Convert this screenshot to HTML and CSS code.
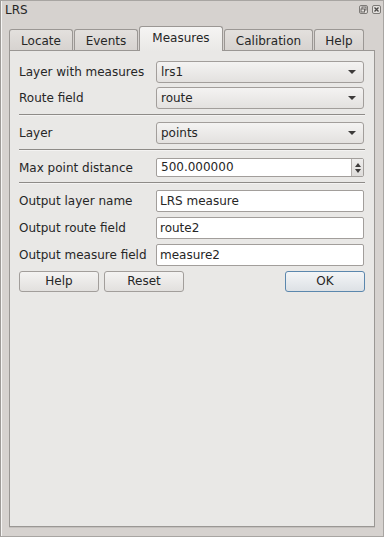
FILE: index.html
```html
<html>
    <head>
       <link rel="stylesheet" href="styles.css">
    </head>
    <body>
       <div id="window">
          <div class="titlebar">
             <span class="title">LRS</span>
             <span class="tb-buttons">
                <svg class="tb-btn" width="9" height="9" viewBox="0 0 9 9">
                   <rect x="0.5" y="0.5" width="8" height="8" rx="1.5" fill="#e4e1de" stroke="#7d7a77"/>
                   <rect x="3" y="2" width="4" height="3" fill="none" stroke="#6a6764"/>
                   <rect x="2" y="4" width="3.5" height="3" fill="#e4e1de" stroke="#6a6764"/>
                </svg>
                <svg class="tb-btn" width="9" height="9" viewBox="0 0 9 9">
                   <rect x="0.5" y="0.5" width="8" height="8" rx="1.5" fill="#e4e1de" stroke="#7d7a77"/>
                   <path d="M2.5 2.5 L6.5 6.5 M6.5 2.5 L2.5 6.5" stroke="#4a4846" stroke-width="1.3"/>
                </svg>
             </span>
          </div>
          <!-- tabs -->
          <div class="tabs">
             <div class="tab" style="width:64px">Locate</div>
             <div class="tab" style="width:64px">Events</div>
             <div class="tab active" style="width:84px">Measures</div>
             <div class="tab" style="width:89px">Calibration</div>
             <div class="tab" style="width:50px">Help</div>
          </div>
          <div class="panel">
             <div class="row">
                <div class="label">Layer with measures</div>
                <div class="combo">lrs1<span class="arrow"></span></div>
             </div>
             <div class="row gap4">
                <div class="label">Route field</div>
                <div class="combo">route<span class="arrow"></span></div>
             </div>
             <div class="sep sep1"></div>
             <div class="row">
                <div class="label">Layer</div>
                <div class="combo">points<span class="arrow"></span></div>
             </div>
             <div class="sep sep2"></div>
             <div class="row">
                <div class="label">Max point distance</div>
                <div class="spin">
                   <span class="spin-text">500.000000</span>
                   <span class="spin-btns">
                      <span class="up"></span>
                      <span class="down"></span>
                   </span>
                </div>
             </div>
             <div class="sep sep3"></div>
             <div class="row">
                <div class="label">Output layer name</div>
                <div class="input">LRS measure</div>
             </div>
             <div class="row gap5">
                <div class="label">Output route field</div>
                <div class="input">route2</div>
             </div>
             <div class="row gap5">
                <div class="label">Output measure field</div>
                <div class="input">measure2</div>
             </div>
             <div class="buttons">
                <div class="btn">Help</div>
                <div class="btn">Reset</div>
                <div class="spacer"></div>
                <div class="btn default">OK</div>
             </div>
          </div>
       </div>
    </body>
 </html>
```

FILE: styles.css
```css
*
{
   margin: 0px;
   box-sizing: border-box;
}
body
{
   font-family: "DejaVu Sans", Verdana, sans-serif;
   font-size: 12px;
   color: #262626;
   background-color: #d6d2cf;
}
#window
{
   width: 384px;
   height: 537px;
   border: 1px solid #a8a5a2;
   border-left-color: #9d9a97;
   box-shadow: inset 1px 0 0 #f6f5f4;
   background-color: #d6d2cf;
   display: flex;
   flex-direction: column;
}
.titlebar
{
   height: 20px;
   display: flex;
   align-items: flex-start;
   padding: 2px 2px 0 4px;
}
.title
{
   font-size: 12px;
   flex: 1;
}
.tb-buttons
{
   display: flex;
   gap: 4px;
   padding-top: 2px;
}
.tabs
{
   height: 29px;
   display: flex;
   align-items: flex-end;
   gap: 1px;
   padding-left: 8px;
   position: relative;
   z-index: 1;
}
.tab
{
   height: 21px;
   border: 1px solid #9b9794;
   border-bottom: none;
   border-radius: 3px 3px 0 0;
   background: linear-gradient(#e3e0dd, #d7d3d0);
   display: flex;
   align-items: center;
   justify-content: center;
   padding-top: 1px;
}
.tab.active
{
   height: 25px;
   margin-bottom: -1px;
   background: linear-gradient(#f5f4f3, #e9e8e6);
   padding-top: 0px;
   padding-bottom: 2px;
}
.panel
{
   flex: 1;
   margin: 0 8px 9px 8px;
   border: 1px solid #9a9794;
   background-color: #e9e8e6;
   box-shadow: 0 1px 0 #c4c0bd;
   padding: 10px 9px 0 9px;
   display: flex;
   flex-direction: column;
}
.row
{
   display: flex;
   align-items: center;
}
.gap4
{
   margin-top: 4px;
}
.gap5
{
   margin-top: 5px;
}
.label
{
   width: 137px;
   flex-shrink: 0;
}
.combo
{
   width: 208px;
   height: 22px;
   border: 1px solid #a29e9b;
   border-radius: 3px;
   background: linear-gradient(#f4f3f2, #e3e1df);
   display: flex;
   align-items: center;
   padding-left: 4px;
   position: relative;
}
.arrow
{
   position: absolute;
   right: 7px;
   top: 8px;
   border-left: 4px solid transparent;
   border-right: 4px solid transparent;
   border-top: 4px solid #3d3b3a;
}
.sep
{
   height: 2px;
   border-top: 1px solid #8e8b88;
   border-bottom: 1px solid #f4f3f2;
}
.sep1
{
   margin: 5px 0 6px 0;
}
.sep2
{
   margin: 5px 0 7px 0;
}
.sep3
{
   margin: 5px 0 6px 0;
}
.spin
{
   width: 208px;
   height: 19px;
   border: 1px solid #a29e9b;
   border-radius: 2px;
   background-color: #ffffff;
   display: flex;
}
.spin-text
{
   flex: 1;
   padding-left: 4px;
   line-height: 17px;
}
.spin-btns
{
   width: 12px;
   border-left: 1px solid #b3afac;
   background: linear-gradient(#eeedec, #dedcda);
   display: flex;
   flex-direction: column;
   align-items: center;
   justify-content: center;
   gap: 2px;
}
.up
{
   border-left: 3px solid transparent;
   border-right: 3px solid transparent;
   border-bottom: 4px solid #3d3b3a;
}
.down
{
   border-left: 3px solid transparent;
   border-right: 3px solid transparent;
   border-top: 4px solid #3d3b3a;
}
.input
{
   width: 208px;
   height: 22px;
   border: 1px solid #a29e9b;
   border-radius: 2px;
   background-color: #ffffff;
   padding-left: 3px;
   line-height: 20px;
}
.buttons
{
   display: flex;
   gap: 5px;
   margin-top: 5px;
}
.spacer
{
   flex: 1;
}
.btn
{
   width: 80px;
   height: 21px;
   border: 1px solid #a29e9b;
   border-radius: 3px;
   background: linear-gradient(#f4f3f2, #e2e0de);
   text-align: center;
   line-height: 19px;
}
.btn.default
{
   border-color: #5b87ad;
   background: linear-gradient(#f3f5f7, #dde1e5);
}
```
